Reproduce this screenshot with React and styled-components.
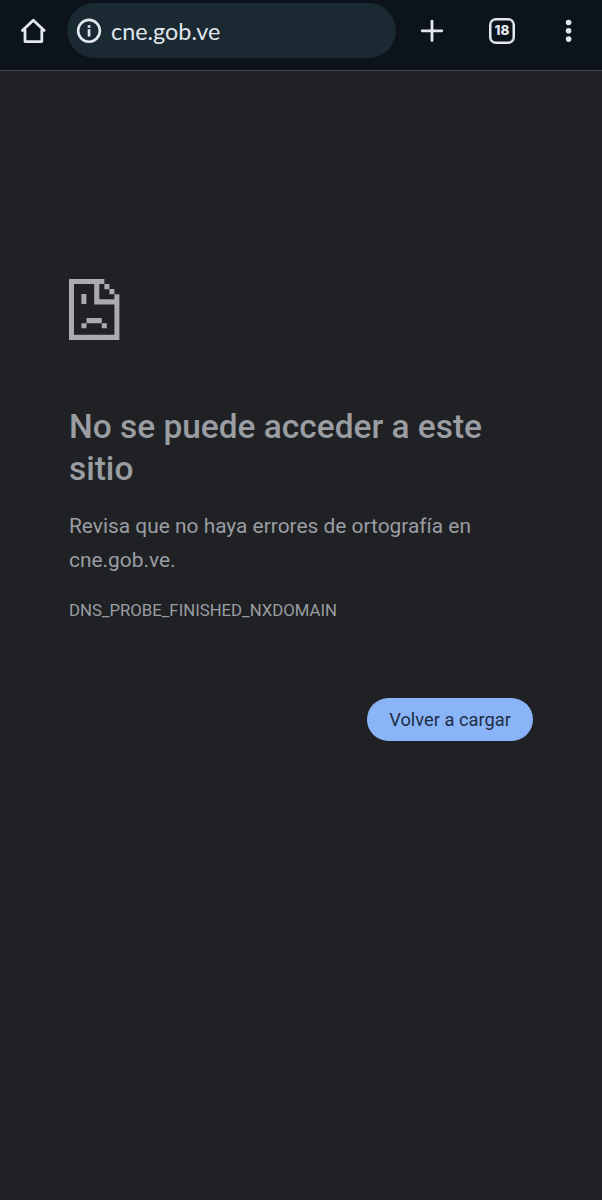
import React from 'react'
import styled, { createGlobalStyle } from 'styled-components'

const HomeIcon = () => (
  <svg width="28" height="28" viewBox="0 0 28 28" fill="none" stroke="#e3e8ef" strokeWidth="2.8" strokeLinejoin="round" strokeLinecap="round">
    <path d="M3.4 13.4 14.3 3.2l10.9 10.2M6 13.2v11.4h16.8V13.2" />
  </svg>
)

const InfoIcon = () => (
  <svg width="26" height="26" viewBox="0 0 26 26">
    <circle cx="13" cy="12.8" r="10.9" fill="none" stroke="#e3e8ef" strokeWidth="2.6" />
    <path d="M11.7 7.2h2.7v2.5h-2.7zM11.7 11.3h2.7v7.2h-2.7z" fill="#e3e8ef" />
  </svg>
)

const PlusIcon = () => (
  <svg width="24" height="24" viewBox="0 0 24 24" stroke="#e3e8ef" strokeWidth="2.8" strokeLinecap="round">
    <path d="M12 2.1v19.4M2.2 11.8h19.6" />
  </svg>
)

const DotsIcon = () => (
  <svg width="8" height="24" viewBox="0 0 8 24" fill="#e3e8ef">
    <circle cx="3.6" cy="3.5" r="2.8" />
    <circle cx="3.6" cy="11.8" r="2.8" />
    <circle cx="3.6" cy="20.1" r="2.8" />
  </svg>
)

const SadPage = () => (
  <svg width="50.5" height="61" viewBox="0 0 50.5 60.5" preserveAspectRatio="none" fill="#a9abae">
    <path d="M0 0h35.4v5h5v5h5v5.1h5v45.4H0zM5 5v50.4h40.4V25.2H25.2V5zM30.3 5v15.1h15.1v-5h-5v-5h-5V5z" fillRule="evenodd" />
    <path d="M12.4 15h5v9.8h-5zM17.5 38.8h15.3v5H17.5zM12.4 43.8h5.1v5h-5.1zM32.8 43.8h5v5h-5z" />
  </svg>
)

function App () {
  return (
    <Page>
      <GlobalStyle />
      <Toolbar>
        <HomeButton aria-label='Inicio'><HomeIcon /></HomeButton>
        <AddressBar>
          <InfoIcon />
          <Url>cne.gob.ve</Url>
        </AddressBar>
        <Actions>
          <PlusIcon />
          <TabCount>18</TabCount>
          <DotsIcon />
        </Actions>
      </Toolbar>
      <ErrorContent>
        <SadPage />
        <Title>No se puede acceder a este sitio</Title>
        <Message>Revisa que no haya errores de ortografía en cne.gob.ve.</Message>
        <ErrorCode>DNS_PROBE_FINISHED_NXDOMAIN</ErrorCode>
        <ReloadButton>Volver a cargar</ReloadButton>
      </ErrorContent>
    </Page>
  )
}

export default App

const GlobalStyle = createGlobalStyle`
  * {
    box-sizing: border-box;
  }
  body {
    margin: 0;
    background-color: #202124;
  }
  button {
    border: 0;
    padding: 0;
    background: none;
  }
`

const Page = styled.div`
  display: flex;
  flex-direction: column;
  width: 602px;
  height: 1200px;
  background-color: #202124;
  font-family: Roboto, sans-serif;
`

const Toolbar = styled.header`
  display: flex;
  align-items: flex-start;
  height: 71px;
  padding: 3px 29px 0 19px;
  background-color: #0c131b;
  border-bottom: 1px solid #46494d;
`

const HomeButton = styled.button`
  display: flex;
  align-items: center;
  height: 56px;
  margin-right: 20px;
`

const AddressBar = styled.div`
  display: flex;
  align-items: center;
  width: 329px;
  height: 55px;
  padding-left: 9px;
  border-radius: 28px;
  background-color: #1a2932;
`

const Url = styled.span`
  margin: 0 0 0 9px;
  font-family: Lato, sans-serif;
  font-size: 23.4px;
  color: #e0e6ed;
`

const Actions = styled.div`
  display: flex;
  flex: 1;
  align-items: center;
  height: 56px;
  padding-left: 24px;
`

const TabCount = styled.div`
  display: flex;
  align-items: center;
  justify-content: center;
  width: 26px;
  height: 26px;
  margin: 0 50px 0 45px;
  border: 2px solid #e3e8ef;
  border-radius: 7px;
  box-shadow: inset 0 0 0 0.5px #e3e8ef;
  font-family: Inter, sans-serif;
  font-size: 13.5px;
  font-weight: 800;
  line-height: 1;
  color: #e3e8ef;
`

const ErrorContent = styled.main`
  display: flex;
  flex-direction: column;
  align-items: flex-start;
  padding: 208px 69px 0;
  color: #9a9da2;
`

const Title = styled.h1`
  margin: 66px 0 0;
  font-size: 33.45px;
  font-weight: 500;
  line-height: 42px;
`

const Message = styled.p`
  margin: 20px 0 0;
  font-size: 20.9px;
  line-height: 33.5px;
`

const ErrorCode = styled.div`
  margin-top: 23px;
  font-size: 16.75px;
  line-height: 20px;
`

const ReloadButton = styled.button`
  align-self: flex-end;
  width: 166px;
  height: 43px;
  margin-top: 78px;
  padding-bottom: 1px;
  border-radius: 22px;
  background-color: #8ab4f8;
  font-family: Roboto, sans-serif;
  font-size: 18.3px;
  color: #202c44;
`
